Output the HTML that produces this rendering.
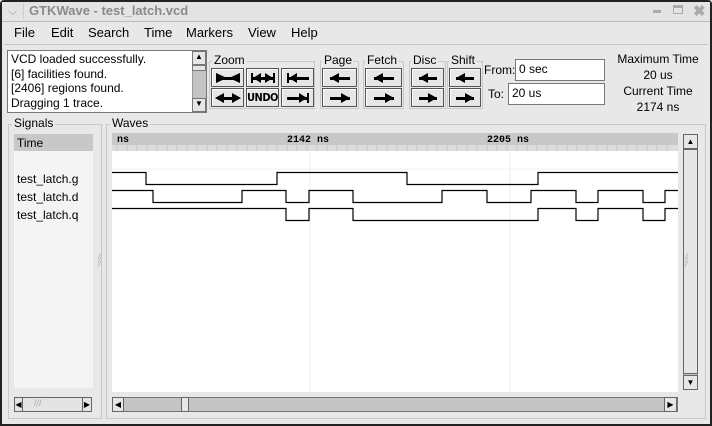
<!DOCTYPE html>
<html><head><style>
*{margin:0;padding:0;box-sizing:border-box}
body{width:712px;height:426px;background:#e8e8e8;font-family:"Liberation Sans",sans-serif;font-size:12px;color:#000;position:relative;overflow:hidden}
.a{position:absolute}
.btn{position:absolute;height:19px;background:#e6e6e6;border:1px solid #555;box-shadow:inset 1px 1px 0 #fff;display:flex;align-items:center;justify-content:center}
.grp{position:absolute;border:1px solid #c8c8c8}
.lbl{position:absolute;background:#e8e8e8;padding:0 2px;font-size:12px}
.inp{position:absolute;background:#fff;border:1px solid #777;padding-left:3px;font-size:12px;line-height:19px}
</style></head><body>
<div class="a" style="left:0;top:0;width:712px;height:426px;border:2px solid #222;border-radius:4px 4px 0 0"></div>
<div class="a" style="left:2px;top:2px;width:708px;height:20px;background:#e4e4e4;border-bottom:1px solid #bbb"></div>
<div class="a" style="left:8px;top:4px;color:#999;font-size:12px">&#x2335;</div>
<div class="a" style="left:23px;top:3px;width:1px;height:16px;background:#ccc"></div>
<div class="a" style="left:29px;top:3px;font-weight:bold;font-size:13px;color:#8a8a8a">GTKWave - test_latch.vcd</div>
<div class="a" style="left:653px;top:10px;width:8px;height:3px;background:#aaa"></div>
<div class="a" style="left:673px;top:5px;width:10px;height:9px;border:1px solid #aaa;border-top-width:3px"></div>
<div class="a" style="left:693px;top:2px;color:#aaa;font-size:15px;font-weight:bold">✖</div>
<div class="a" style="left:14px;top:25px;font-size:13px">File</div>
<div class="a" style="left:51px;top:25px;font-size:13px">Edit</div>
<div class="a" style="left:88px;top:25px;font-size:13px">Search</div>
<div class="a" style="left:144px;top:25px;font-size:13px">Time</div>
<div class="a" style="left:186px;top:25px;font-size:13px">Markers</div>
<div class="a" style="left:248px;top:25px;font-size:13px">View</div>
<div class="a" style="left:291px;top:25px;font-size:13px">Help</div>
<div class="a" style="left:4px;top:44px;width:704px;height:1px;background:#c8c8c8"></div>
<div class="a" style="left:7px;top:50px;width:200px;height:63px;border:1px solid #777;background:#fff"></div>
<div class="a" style="left:11px;top:52px;line-height:14.5px;font-size:12px">VCD loaded successfully.<br>[6] facilities found.<br>[2406] regions found.<br>Dragging 1 trace.</div>
<div class="a" style="left:192px;top:51px;width:14px;height:61px;background:#c4c4c4;border-left:1px solid #999"></div>
<div class="a" style="left:192px;top:51px;width:14px;height:14px;background:#e6e6e6;border:1px solid #777;font-size:8px;text-align:center">▲</div>
<div class="a" style="left:192px;top:65px;width:14px;height:6px;background:#e6e6e6;border:1px solid #777"></div>
<div class="a" style="left:192px;top:98px;width:14px;height:14px;background:#e6e6e6;border:1px solid #777;font-size:8px;text-align:center">▼</div>
<div class="grp" style="left:209px;top:61px;width:106px;height:48px"></div><div class="lbl" style="left:212px;top:53px">Zoom</div>
<div class="grp" style="left:320px;top:61px;width:39px;height:48px"></div><div class="lbl" style="left:322px;top:53px">Page</div>
<div class="grp" style="left:363px;top:61px;width:41px;height:48px"></div><div class="lbl" style="left:365px;top:53px">Fetch</div>
<div class="grp" style="left:409px;top:61px;width:37px;height:48px"></div><div class="lbl" style="left:411px;top:53px">Disc</div>
<div class="grp" style="left:447px;top:61px;width:36px;height:48px"></div><div class="lbl" style="left:449px;top:53px">Shift</div>
<div class="btn" style="left:211px;top:68px;width:33px"><svg width="28" height="12"><path d="M2 1L13 6L2 11Z M26 1L15 6L26 11Z"/><rect x="2" y="5" width="24" height="3"/></svg></div>
<div class="btn" style="left:246px;top:68px;width:33px"><svg width="28" height="12"><rect x="2" y="1" width="2" height="10"/><rect x="24" y="1" width="2" height="10"/><path d="M4 6L12 1V11Z M24 6L16 1V11Z"/><rect x="4" y="5" width="20" height="3"/></svg></div>
<div class="btn" style="left:281px;top:68px;width:33px"><svg width="28" height="12"><rect x="3" y="1" width="2" height="10"/><path d="M5 6L13 1V11Z"/><rect x="5" y="5" width="20" height="3"/></svg></div>
<div class="btn" style="left:211px;top:88px;width:33px"><svg width="28" height="12"><path d="M1 6L10 1V11Z M27 6L18 1V11Z"/><rect x="5" y="5" width="18" height="3"/></svg></div>
<div class="btn" style="left:246px;top:88px;width:33px;font-weight:bold;font-size:11px;letter-spacing:-0.5px;font-family:'DejaVu Sans Condensed','Liberation Sans',sans-serif">UNDO</div>
<div class="btn" style="left:281px;top:88px;width:33px"><svg width="28" height="12"><rect x="23" y="1" width="2" height="10"/><path d="M23 6L15 1V11Z"/><rect x="3" y="5" width="20" height="3"/></svg></div>
<div class="btn" style="left:322px;top:68px;width:35px"><svg width="28" height="12"><path d="M4 6L13 1V11Z"/><rect x="4" y="5" width="20" height="3"/></svg></div>
<div class="btn" style="left:322px;top:88px;width:35px"><svg width="28" height="12"><path d="M24 6L15 1V11Z"/><rect x="4" y="5" width="20" height="3"/></svg></div>
<div class="btn" style="left:365px;top:68px;width:37px"><svg width="28" height="12"><path d="M4 6L13 1V11Z"/><rect x="4" y="5" width="20" height="3"/></svg></div>
<div class="btn" style="left:365px;top:88px;width:37px"><svg width="28" height="12"><path d="M24 6L15 1V11Z"/><rect x="4" y="5" width="20" height="3"/></svg></div>
<div class="btn" style="left:411px;top:68px;width:33px"><svg width="24" height="12"><path d="M3 6L12 1V11Z"/><rect x="3" y="5" width="18" height="3"/></svg></div>
<div class="btn" style="left:411px;top:88px;width:33px"><svg width="24" height="12"><path d="M21 6L12 1V11Z"/><rect x="3" y="5" width="18" height="3"/></svg></div>
<div class="btn" style="left:449px;top:68px;width:32px"><svg width="24" height="12"><path d="M3 6L12 1V11Z"/><rect x="3" y="5" width="18" height="3"/></svg></div>
<div class="btn" style="left:449px;top:88px;width:32px"><svg width="24" height="12"><path d="M21 6L12 1V11Z"/><rect x="3" y="5" width="18" height="3"/></svg></div>
<div class="a" style="left:484px;top:63px">From:</div>
<div class="inp" style="left:515px;top:59px;width:90px;height:22px">0 sec</div>
<div class="a" style="left:488px;top:87px">To:</div>
<div class="inp" style="left:508px;top:83px;width:97px;height:22px">20 us</div>
<div class="a" style="left:608px;top:51px;width:100px;text-align:center;line-height:16px">Maximum Time<br>20 us<br>Current Time<br>2174 ns</div>
<div class="grp" style="left:8px;top:124px;width:94px;height:295px"></div><div class="lbl" style="left:12px;top:116px">Signals</div>
<div class="a" style="left:14px;top:134px;width:79px;height:254px;background:#f4f4f4"></div>
<div class="a" style="left:14px;top:134px;width:79px;height:17px;background:#c8c8c8;padding:2px 0 0 3px">Time</div>
<div class="a" style="left:17px;top:170px;line-height:18px">test_latch.g<br>test_latch.d<br>test_latch.q</div>
<div class="a" style="left:14px;top:397px;width:78px;height:15px;background:#e4e4e4;border:1px solid #666"></div>
<div class="a" style="left:14px;top:397px;width:9px;height:15px;border:1px solid #666;font-size:8px;line-height:13px;text-align:center">◀</div>
<div class="a" style="left:82px;top:397px;width:10px;height:15px;border:1px solid #666;font-size:8px;line-height:13px;text-align:center">▶</div>
<div class="a" style="left:34px;top:398px;color:#aaa;font-size:9px">///</div>
<div class="a" style="left:99px;top:255px;color:#999;font-size:8px;line-height:4px">⁄<br>⁄<br>⁄</div>
<div class="grp" style="left:106px;top:124px;width:600px;height:295px"></div><div class="lbl" style="left:110px;top:116px">Waves</div>
<svg class="a" style="left:112px;top:133px" width="566" height="259">
<rect x="0" y="0" width="566" height="259" fill="#fff"/>
<rect x="0" y="0" width="566" height="18" fill="#c8c8c8"/>
<rect x="0" y="12" width="566" height="6" fill="#ddd"/>
<g stroke="#c8c8c8" stroke-width="1">
<path d="M5 12V18M15 12V18M25 12V18M35 12V18M45 12V18M55 12V18M65 12V18M75 12V18M85 12V18M95 12V18M105 12V18M115 12V18M125 12V18M135 12V18M145 12V18M155 12V18M165 12V18M175 12V18M185 12V18M195 12V18M205 12V18M215 12V18M225 12V18M235 12V18M245 12V18M255 12V18M265 12V18M275 12V18M285 12V18M295 12V18M305 12V18M315 12V18M325 12V18M335 12V18M345 12V18M355 12V18M365 12V18M375 12V18M385 12V18M395 12V18M405 12V18M415 12V18M425 12V18M435 12V18M445 12V18M455 12V18M465 12V18M475 12V18M485 12V18M495 12V18M505 12V18M515 12V18M525 12V18M535 12V18M545 12V18M555 12V18"/></g>
<line x1="198" y1="18" x2="198" y2="259" stroke="#eee"/>
<line x1="398" y1="18" x2="398" y2="259" stroke="#eee"/>
<line x1="0" y1="36" x2="566" y2="36" stroke="#f2f2f2"/>
<g font-family="Liberation Mono,monospace" font-weight="bold" font-size="10">
<text x="5" y="9">ns</text><text x="175" y="9">2142 ns</text><text x="375" y="9">2205 ns</text></g>
<g fill="none" stroke="#000" stroke-width="1.2">
<path d="M0 39.5H34V51.5H165V39.5H295V51.5H426V39.5H566"/>
<path d="M0 57.5H41V69.5H130V57.5H174V69.5H197V57.5H241V69.5H330V57.5H375V69.5H419V57.5H464V69.5H486V57.5H531V69.5H553V57.5H566"/>
<path d="M0 75.5H174V87.5H197V75.5H241V87.5H426V75.5H464V87.5H486V75.5H531V87.5H553V75.5H566"/>
</g></svg>
<div class="a" style="left:683px;top:134px;width:15px;height:256px;background:#c4c4c4;border:1px solid #888"></div>
<div class="a" style="left:683px;top:134px;width:15px;height:15px;background:#e6e6e6;border:1px solid #666;font-size:8px;text-align:center;line-height:13px">▲</div>
<div class="a" style="left:683px;top:149px;width:15px;height:225px;background:#e6e6e6;border:1px solid #666"></div>
<div class="a" style="left:683px;top:375px;width:15px;height:15px;background:#e6e6e6;border:1px solid #666;font-size:8px;text-align:center;line-height:13px">▼</div>
<div class="a" style="left:686px;top:255px;color:#999;font-size:8px;line-height:4px">⁄<br>⁄<br>⁄</div>
<div class="a" style="left:112px;top:397px;width:566px;height:15px;background:#c4c4c4;border:1px solid #777"></div>
<div class="a" style="left:112px;top:397px;width:12px;height:15px;background:#e6e6e6;border:1px solid #666;font-size:8px;text-align:center;line-height:13px">◀</div>
<div class="a" style="left:181px;top:397px;width:8px;height:15px;background:#e6e6e6;border:1px solid #666"></div>
<div class="a" style="left:664px;top:397px;width:13px;height:15px;background:#e6e6e6;border:1px solid #666;font-size:8px;text-align:center;line-height:13px">▶</div>
</body></html>
